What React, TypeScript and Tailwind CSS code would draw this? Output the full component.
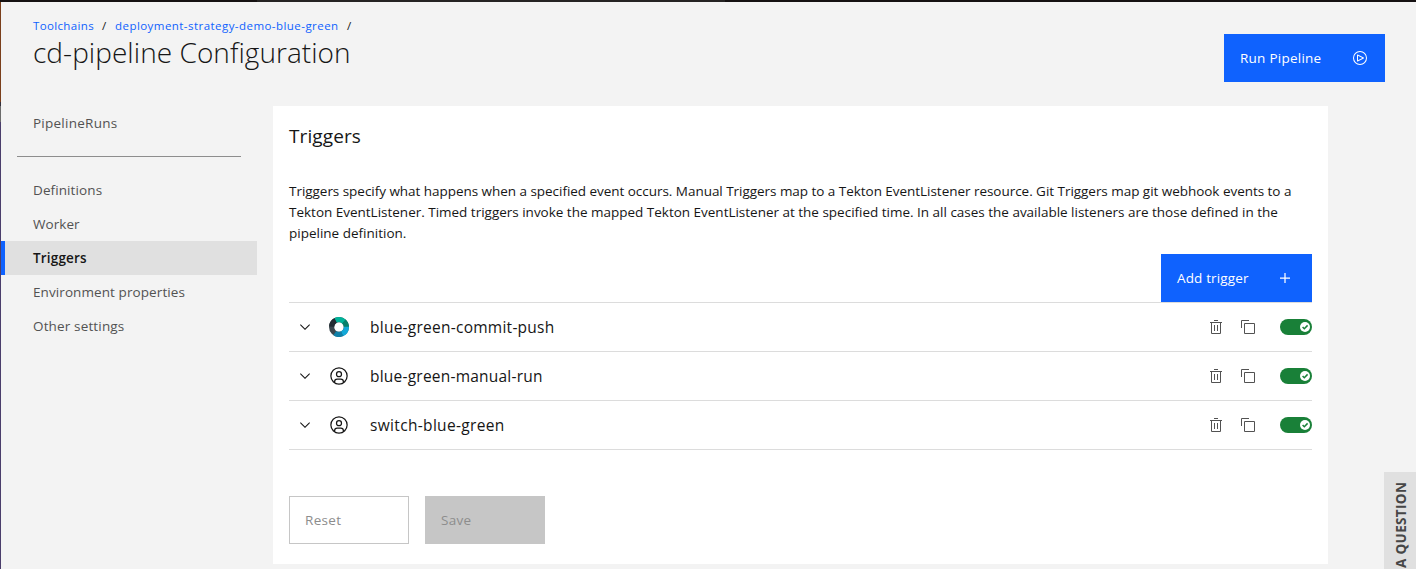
import React from "react";

type Glyph = { size: number; d: string[]; className?: string; box?: number };

function Icon({ size, d, className = "", box = 32 }: Glyph) {
  return (
    <svg width={size} height={size} viewBox={`0 0 ${box} ${box}`} fill="currentColor" className={`block shrink-0 ${className}`}>
      {d.map((p) => (
        <path key={p} d={p} />
      ))}
    </svg>
  );
}

const CHEVRON = ["M8 11L3 6 3.7 5.3 8 9.6 12.3 5.3 13 6z"];
const COPY = [
  "M28,10V28H10V10H28m0-2H10a2,2,0,0,0-2,2V28a2,2,0,0,0,2,2H28a2,2,0,0,0,2-2V10a2,2,0,0,0-2-2Z",
  "M4,18H2V4A2,2,0,0,1,4,2H18V4H4Z",
];
const TRASH = ["M12 12H14V24H12z", "M18 12H20V24H18z", "M4 6V8H6V28a2 2 0 002 2H24a2 2 0 002-2V8h2V6zM8 28V8H24V28z", "M12 2H20V4H12z"];
const PLAY = [
  "M11,23a1,1,0,0,1-1-1V10a1,1,0,0,1,1.4473-.8945l12,6a1,1,0,0,1,0,1.789l-12,6A1.001,1.001,0,0,1,11,23Zm1-11.3821v8.7642L20.7642,16Z",
  "M16,4A12,12,0,1,1,4,16,12,12,0,0,1,16,4m0-2A14,14,0,1,0,30,16,14,14,0,0,0,16,2Z",
];
const ADD = ["M17 15 17 8 15 8 15 15 8 15 8 17 15 17 15 24 17 24 17 17 24 17 24 15z"];
const AVATAR = [
  "M16,8a5,5,0,1,0,5,5A5,5,0,0,0,16,8Zm0,8a3,3,0,1,1,3-3A3.0034,3.0034,0,0,1,16,16Z",
  "M16,2A14,14,0,1,0,30,16,14.0158,14.0158,0,0,0,16,2ZM10,26.3765V25a3.0033,3.0033,0,0,1,3-3h6a3.0033,3.0033,0,0,1,3,3v1.3765a11.8989,11.8989,0,0,1-12,0Zm13.9925-1.4507A5.0016,5.0016,0,0,0,19,20H13a5.0016,5.0016,0,0,0-4.9925,4.9258,12,12,0,1,1,15.985,0Z",
];

function RingLogo() {
  return (
    <svg width="20" height="20" viewBox="0 0 20 20" fill="none" strokeWidth="5.2" className="block shrink-0">
      <circle cx="10" cy="10" r="7.4" stroke="#3c474e" />
      <path d="M6.3 3.6A7.4 7.4 0 0 1 15.2 4.8" stroke="#00b299" />
      <path d="M14.8 4.4A7.4 7.4 0 0 1 17.4 10.2" stroke="#067f6b" />
      <path d="M17.4 9.8A7.4 7.4 0 0 1 12.9 16.8" stroke="#12a8d8" />
      <path d="M13.2 16.7A7.4 7.4 0 0 1 5.8 16.1" stroke="#1180a8" />
      <path d="M2.6 9.6A7.4 7.4 0 0 1 6.6 3.4" stroke="#232c33" />
    </svg>
  );
}

function Toggle() {
  return (
    <div className="flex h-4 w-8 items-center justify-end rounded-full bg-[#198038] pr-[2px]">
      <svg width="10" height="10" viewBox="0 0 10 10" className="block">
        <circle cx="5" cy="5" r="5" fill="#fff" />
        <path d="M2.6 5L4.3 6.7L7.6 3.4" fill="none" stroke="#198038" strokeWidth="1.5" />
      </svg>
    </div>
  );
}

const triggers = [
  { name: "blue-green-commit-push", git: true, cls: "tracking-[0.25px]" },
  { name: "blue-green-manual-run", git: false, cls: "tracking-[0.22px]" },
  { name: "switch-blue-green", git: false, cls: "tracking-[0.33px]" },
];

const nav = [
  { label: "Definitions", cls: "tracking-[0.1px]" },
  { label: "Worker", cls: "tracking-[0.05px]" },
  { label: "Triggers", cls: "tracking-[0.18px]" },
  { label: "Environment properties", cls: "tracking-[0.09px]" },
  { label: "Other settings", cls: "tracking-[0.15px]" },
];

export default function App() {
  return (
    <div className="relative flex h-[569px] w-[1416px] flex-col overflow-hidden bg-[#f3f3f3] font-['Open_Sans','Noto_Sans',sans-serif] text-[13.5px] text-[#161616]">
      <div className="flex h-[2px] shrink-0">
        <div className="w-[257px] bg-[#151112]" />
        <div className="w-[468px] bg-[#252323]" />
        <div className="flex-1 bg-[#151112]" />
      </div>
      <div className="flex min-h-0 flex-1">
        <div className="flex w-px shrink-0 flex-col">
          <div className="h-[100px] bg-[#7a3f1c]" />
          <div className="h-1 bg-[#34303c]" />
          <div className="h-4 bg-[#6b6b6b]" />
          <div className="flex-1 bg-[#4a3d6b]" />
        </div>
        <div className="flex min-w-0 flex-1 flex-col">
          <header className="flex h-[104px] shrink-0 justify-between pl-8">
            <div className="pt-4">
              <nav className="flex h-4 items-center whitespace-pre text-[11.5px]">
                <a className="w-[61px] tracking-[0.35px] text-[#0f62fe]">Toolchains</a>
                <span className="w-[21px] pl-2">/</span>
                <a className="w-[224px] tracking-[0.45px] text-[#0f62fe]">deployment-strategy-demo-blue-green</a>
                <span className="pl-2">/</span>
              </nav>
              <h1 className="whitespace-nowrap text-[28px] leading-9 font-light tracking-[0.05px]">cd-pipeline Configuration</h1>
            </div>
            <button className="mt-8 mr-[31px] flex h-12 w-[161px] items-center justify-between bg-[#0f62fe] pr-[17px] pl-4 text-white">
              <span className="tracking-[0.25px]">Run Pipeline</span>
              <Icon size={16} d={PLAY} />
            </button>
          </header>
          <div className="flex min-h-0 flex-1">
            <aside className="w-64 shrink-0 text-[#525252]">
              <div className="flex h-[34px] items-center pl-8 tracking-[0.25px]">PipelineRuns</div>
              <div className="mt-4 mr-4 mb-4 ml-4 h-px bg-[#8d8d8d]" />
              {nav.map((n) =>
                n.label === "Triggers" ? (
                  <div key={n.label} className="flex h-[34px] items-center border-l-4 border-[#0f62fe] bg-[#e0e0e0] pl-7 font-semibold text-[#161616]">
                    <span className={n.cls}>{n.label}</span>
                  </div>
                ) : (
                  <div key={n.label} className="flex h-[34px] items-center pl-8">
                    <span className={n.cls}>{n.label}</span>
                  </div>
                )
              )}
            </aside>
            <main className="ml-4 h-[458px] w-[1055px] shrink-0 bg-white px-4 pt-4">
              <h2 className="text-[19px] leading-7 font-normal tracking-[0.1px]">Triggers</h2>
              <div className="mt-[31px] whitespace-nowrap leading-[21px]">
                <p className="tracking-[-0.037px]">Triggers specify what happens when a specified event occurs. Manual Triggers map to a Tekton EventListener resource. Git Triggers map git webhook events to a</p>
                <p className="tracking-[-0.01px]">Tekton EventListener. Timed triggers invoke the mapped Tekton EventListener at the specified time. In all cases the available listeners are those defined in the</p>
                <p>pipeline definition.</p>
              </div>
              <div className="mt-[10px] flex justify-end">
                <button className="flex h-12 w-[151px] items-center justify-between bg-[#0f62fe] pr-[17px] pl-4 text-white">
                  <span className="tracking-[0.15px]">Add trigger</span>
                  <Icon size={20} d={ADD} />
                </button>
              </div>
              <ul className="border-b border-[#dcdcdc]">
                {triggers.map((t) => (
                  <li key={t.name} className="flex h-[49px] items-center border-t border-[#dcdcdc] pl-2">
                    <Icon size={16} d={CHEVRON} box={16} />
                    <div className="ml-4 flex w-[41px]">{t.git ? <RingLogo /> : <Icon size={20} d={AVATAR} />}</div>
                    <span className={`pt-[2px] text-[15.5px] ${t.cls}`}>{t.name}</span>
                    <div className="ml-auto flex items-center text-[#525252]">
                      <Icon size={16} d={TRASH} />
                      <Icon size={16} d={COPY} className="ml-4" />
                      <div className="ml-6">
                        <Toggle />
                      </div>
                    </div>
                  </li>
                ))}
              </ul>
              <div className="mt-[46px] flex gap-4 text-[#8d8d8d]">
                <button className="flex h-12 w-[120px] items-center border border-[#c6c6c6] pl-[15px] tracking-[0.3px]">Reset</button>
                <button className="flex h-12 w-[120px] items-center bg-[#c6c6c6] pl-4 tracking-[0.3px]">Save</button>
              </div>
            </main>
          </div>
        </div>
      </div>
      <div className="absolute top-[472px] right-0 flex h-[200px] w-8 justify-end bg-[#e0e0e0] pt-[10px] pr-[5px] text-[13.5px] leading-5 font-bold tracking-[0.35px] text-[#464646]">
        <span className="h-[86px] rotate-180 whitespace-nowrap [writing-mode:vertical-rl]">A QUESTION</span>
      </div>
    </div>
  );
}
